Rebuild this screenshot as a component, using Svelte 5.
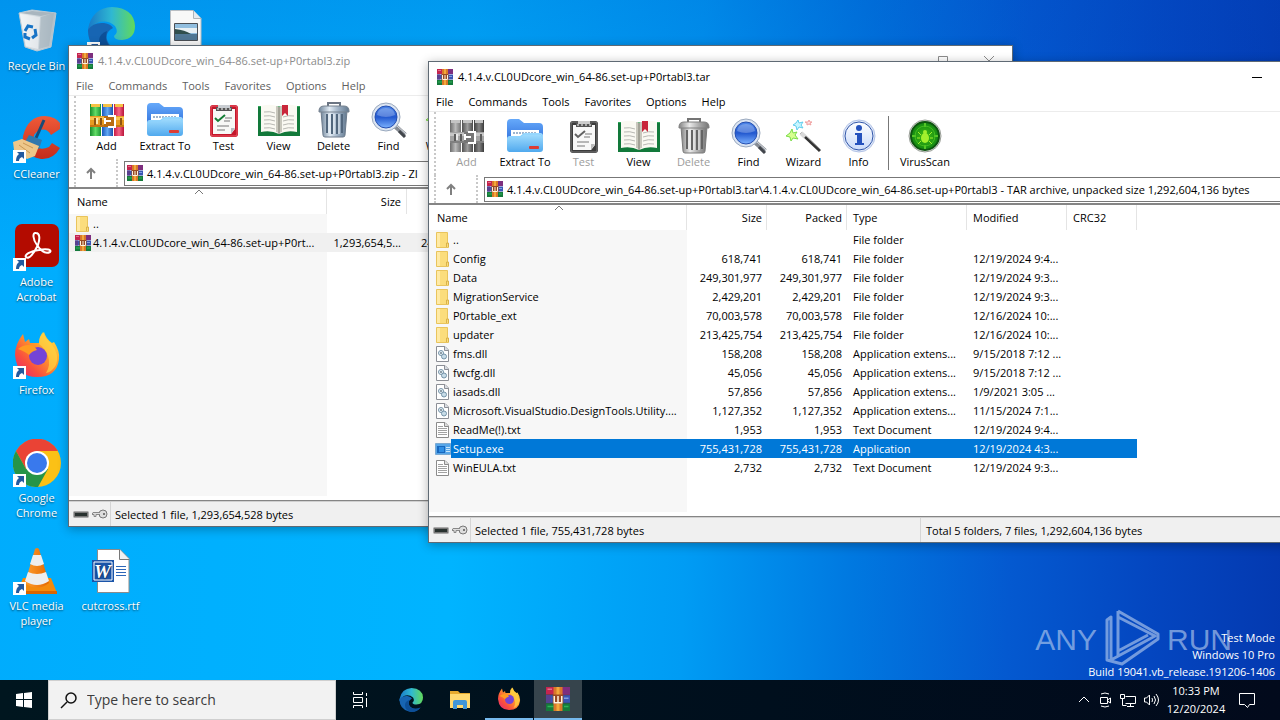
<script>
  const toolbar = [
    { icon: 'books', label: 'Add' },
    { icon: 'extract', label: 'Extract To', wide: true },
    { icon: 'test', label: 'Test' },
    { icon: 'view', label: 'View' },
    { icon: 'trash', label: 'Delete' },
    { icon: 'find', label: 'Find' },
    { icon: 'wizard', label: 'Wizard' },
    { icon: 'info', label: 'Info' },
    { icon: 'virus', label: 'VirusScan', wide: true, split: true }
  ];
  const menus = ['File', 'Commands', 'Tools', 'Favorites', 'Options', 'Help'];
  const base = '4.1.4.v.CL0UDcore_win_64-86.set-up+P0rtabl3';

  const back = {
    id: 'zip',
    title: base + '.zip',
    address: base + '.zip - ZI',
    tools: toolbar.slice(0, 7),
    disabled: [],
    rows: [
      ['folder', '..', '', '', '', ''],
      ['rar', '4.1.4.v.CL0UDcore_win_64-86.set-up+P0rt...', '1,293,654,5...', '24', '', '']
    ],
    selected: 1,
    status: 'Selected 1 file, 1,293,654,528 bytes',
    total: ''
  };
  const front = {
    id: 'tar',
    title: base + '.tar',
    address: base + '.tar\\' + base + ' - TAR archive, unpacked size 1,292,604,136 bytes',
    tools: toolbar,
    disabled: ['Add', 'Test', 'Delete'],
    rows: [
      ['folder', '..', '', '', 'File folder', ''],
      ['folder', 'Config', '618,741', '618,741', 'File folder', '12/19/2024 9:4...'],
      ['folder', 'Data', '249,301,977', '249,301,977', 'File folder', '12/19/2024 9:3...'],
      ['folder', 'MigrationService', '2,429,201', '2,429,201', 'File folder', '12/19/2024 9:3...'],
      ['folder', 'P0rtable_ext', '70,003,578', '70,003,578', 'File folder', '12/16/2024 10:...'],
      ['folder', 'updater', '213,425,754', '213,425,754', 'File folder', '12/16/2024 10:...'],
      ['dll', 'fms.dll', '158,208', '158,208', 'Application extens...', '9/15/2018 7:12 ...'],
      ['dll', 'fwcfg.dll', '45,056', '45,056', 'Application extens...', '9/15/2018 7:12 ...'],
      ['dll', 'iasads.dll', '57,856', '57,856', 'Application extens...', '1/9/2021 3:05 ...'],
      ['dll', 'Microsoft.VisualStudio.DesignTools.Utility....', '1,127,352', '1,127,352', 'Application extens...', '11/15/2024 7:1...'],
      ['txt', 'ReadMe(!).txt', '1,953', '1,953', 'Text Document', '12/19/2024 9:4...'],
      ['exe', 'Setup.exe', '755,431,728', '755,431,728', 'Application', '12/19/2024 4:3...'],
      ['txt', 'WinEULA.txt', '2,732', '2,732', 'Text Document', '12/19/2024 9:3...']
    ],
    selected: 11,
    status: 'Selected 1 file, 755,431,728 bytes',
    total: 'Total 5 folders, 7 files, 1,292,604,136 bytes'
  };

  const shortcuts = [
    { icon: 'bin', label: 'Recycle Bin', col: 1, row: 1 },
    { icon: 'ccleaner', label: 'CCleaner', col: 1, row: 2, link: true },
    { icon: 'acrobat', label: 'Adobe Acrobat', col: 1, row: 3, link: true },
    { icon: 'firefox', label: 'Firefox', col: 1, row: 4, link: true },
    { icon: 'chrome', label: 'Google Chrome', col: 1, row: 5, link: true },
    { icon: 'vlc', label: 'VLC media player', col: 1, row: 6, link: true },
    { icon: 'edge', label: '', col: 2, row: 1, link: true },
    { icon: 'word', label: 'cutcross.rtf', col: 2, row: 6 },
    { icon: 'image', label: '', col: 3, row: 1 }
  ];
</script>

{#snippet glyph(name)}
  {#if name === 'rar'}
    <svg viewBox="0 0 16 16" width="16" height="16">
      <path fill="#c4244f" d="M0 0h16v5H0z" /><path fill="#7d2e7e" d="M11 0h5v5h-5z" />
      <path fill="#3a55b4" d="M0 5.500h16v5H0z" /><path fill="#59408f" d="M0 5.500h3v5H0z" />
      <path fill="#157a3b" d="M0 11h16v5H0z" /><path fill="#2eb259" d="M1 12.500h4v1H1zM12 12.500h3v1h-3z" />
      <path fill="#e0708a" d="M1 1h3v1H1z" /><path fill="#7fa0e0" d="M12 7h3v1h-3z" />
      <path fill="#d9782a" d="M5 0h6v16H5z" /><path fill="#f2a93b" d="M7 0h2v16H7z" />
      <path fill="#9a4a22" d="M4.500 5h7v6h-7z" /><path fill="none" stroke="#fff4dc" d="M5.500 6v4.500h5V6M8 6v4" />
    </svg>
  {:else if name === 'books'}
    <svg viewBox="0 0 34 34" width="34" height="34">
      <path fill="url(#bookG)" d="M0 1h11v32H0z" /><path fill="url(#bookB)" d="M12 1h11v32H12z" /><path fill="url(#bookR)" d="M24 1h10v32H24z" />
      <path fill="#f6c244" d="M1 1h9v3H1zM13 1h9v3h-9zM25 1h8v3h-8z" />
      <path fill="#e89b22" d="M0 13h34v11H0z" /><path fill="#f9c452" d="M0 14h34v3H0z" /><path fill="#c67612" d="M0 22h34v2H0z" />
      <path fill="#8f5410" d="M4 15h2v7H4zM10 15h2v7h-2zM30 15h2v7h-2z" /><path fill="#ffe9a8" d="M6 15h2v6H6z" />
      <rect x="14" y="13" width="12" height="11" rx="1" fill="#b96c14" />
      <path fill="none" stroke="#fff" stroke-width="2" d="M18 13h7v11h-7M14 18h7M15 15v6" />
    </svg>
  {:else if name === 'extract'}
    <svg viewBox="0 0 38 36" width="38" height="36">
      <path fill="url(#foldBack)" d="M1 5q0-4 4-4h8l5 4h15q4 0 4 4v18H1z" />
      <path fill="#fff" d="M5 12h28v12H5z" /><path stroke="#9db4cf" stroke-width="2" stroke-dasharray="2 1" d="M7 15h24" />
      <path fill="url(#foldFront)" d="M1 21q0-3 3-3h10l4-3h16q3 0 3 3v13q0 3-3 3H4q-3 0-3-3z" />
      <path fill="none" stroke="#8ad2ff" d="M2 22q0-3 3-3h9l4-3h15q3 0 3 3" /><rect x="23" y="28" width="10" height="3" rx="1" fill="#dd3d35" />
    </svg>
  {:else if name === 'test'}
    <svg viewBox="0 0 30 34" width="30" height="34">
      <rect x="1" y="2" width="28" height="32" rx="3" fill="#c3162b" /><rect x="2" y="3" width="26" height="30" rx="2" fill="none" stroke="#ee5964" />
      <path fill="#f8f8f6" d="M4 6h22v20l-4 5H4z" /><path fill="#b7bcc2" d="m22 31 4-6h-4z" />
      <path fill="#555" d="M7 4h16v4H7z" /><path fill="#c9cdd2" d="M9 2h12v3H9z" /><path stroke="#fff" stroke-dasharray="2 2" d="M8 6h14" />
      <path fill="none" stroke="#147e35" stroke-width="2" d="m6 15 3 3 7-6" /><path stroke="#777" d="M16 15h7M15 18h6M8 23h12M8 27h8" />
    </svg>
  {:else if name === 'view'}
    <svg viewBox="0 0 42 34" width="42" height="34">
      <path fill="#12793a" d="M0 3h42v30H0z" /><path fill="#30a85a" d="M0 3h42v1H0z" />
      <path fill="#faf9f2" d="M3 3q10-3 18 1 8-4 18-1v26q-10-2-18 2-8-4-18-2z" />
      <path fill="#c9c8bd" d="M18 3q2 0 3 1 1-1 3-1v26q-2 0-3 2-1-2-3-2z" /><path stroke="#7d7c70" d="M21 4v27" />
      <path fill="none" stroke="#b8b8b3" d="M6 9q6-1 11 1M6 13q6-1 11 1M6 17q6-1 11 1M6 21q6-1 11 1M6 25q6-1 11 1M25 14q5-2 11-1M25 18q5-2 11-1M25 22q5-2 11-1M25 26q5-2 11-1" />
      <path fill="#c9263a" d="M24 2h6v11l-3-3-3 3z" />
    </svg>
  {:else if name === 'trash'}
    <svg viewBox="0 0 32 36" width="32" height="36">
      <path fill="none" stroke="#6b7583" stroke-width="2" d="M10 4V1h12v3" /><path fill="url(#metal)" stroke="#6c7b8c" d="M3 9h26l-2 24q0 2-2 2H7q-2 0-2-2z" />
      <path stroke="#52677d" stroke-width="2" d="M9 12v19M14 12v20M19 12v20M24 12v19" /><path stroke="#edf4fa" d="M11 12v19M16 12v20M21 12v20" />
      <path fill="url(#metal)" stroke="#77828f" d="M1 9q0-5 5-5h20q5 0 5 5v1H1z" />
    </svg>
  {:else if name === 'find'}
    <svg viewBox="0 0 38 36" width="38" height="36">
      <path stroke="#878c94" stroke-width="5" d="m25 24 10 9" /><path stroke="#42464c" stroke-width="3" d="m29 29 6 6" /><path stroke="#d9dde2" d="m26 23 10 9" />
      <circle cx="16" cy="15" r="14" fill="#dce5f2" stroke="#9aa9be" /><circle cx="16" cy="15" r="11" fill="url(#lens)" stroke="#254fb0" />
      <path fill="#fff" opacity=".25" d="M7 13q1-7 9-7t9 7q-9 4-18 0" />
    </svg>
  {:else if name === 'wizard'}
    <svg viewBox="0 0 36 36" width="36" height="36">
      <path stroke="#333" stroke-width="3" d="m15 15 19 18" /><path stroke="#a7a7a7" d="m16 14 19 18" /><path stroke="#d9d9d9" stroke-width="4" d="m15 15 4 4" />
      <path fill="#d7ff8f" stroke="#7bdc4a" d="m6 11 1 4 4-1-2 3 3 4-5-1-2 3-1-4-4-1 4-3z" />
      <path fill="#c6f6ff" stroke="#62cdee" d="m12 2 1 3 4-1-2 3 2 3-4-1-2 3-1-4-3-1 3-2z" /><path fill="#ffe1e1" stroke="#f0a0a0" d="m23 2 1 2h2l-2 1 1 2-2-1-2 1V5l-2-1h3z" />
    </svg>
  {:else if name === 'info'}
    <svg viewBox="0 0 34 34" width="34" height="34">
      <circle cx="17" cy="17" r="16" fill="#dfe8f8" stroke="#b3c3e6" /><circle cx="17" cy="17" r="14" fill="url(#pale)" stroke="#3156a9" />
      <circle cx="17" cy="9" r="3" fill="#2451bd" /><path fill="#2451bd" d="M13 14h7v10h2v2H13v-2h2v-8h-2z" />
    </svg>
  {:else if name === 'virus'}
    <svg viewBox="0 0 34 34" width="34" height="34">
      <circle cx="17" cy="17" r="16" fill="#e6e9e4" stroke="#989d96" /><circle cx="17" cy="17" r="14" fill="url(#green)" stroke="#0e5410" stroke-width="2" />
      <path stroke="#93ff3f" d="M17 4v4M17 26v4M4 17h4M26 17h4" /><circle cx="17" cy="17" r="10" fill="none" stroke="#43bc20" />
      <ellipse cx="17" cy="19" rx="4" ry="5" fill="#a2f02d" /><circle cx="17" cy="13" r="2" fill="#a2f02d" /><path fill="none" stroke="#a2f02d" d="m13 16-3-3M12 19H9M13 22l-3 3M21 16l3-3M22 19h3M21 22l3 3" />
    </svg>
  {:else if name === 'folder'}
    <svg viewBox="0 0 16 16" width="16" height="16"><path fill="#fbdd7c" stroke="#e9c45c" d="M1.500.5h11V11l1 1v3.500h-12z" /><path fill="#ffeaa5" d="M2 1h3v14H2z" /><path fill="none" stroke="#d9b24a" d="M11.500 15v-4h2v4" /></svg>
  {:else if name === 'dll'}
    <svg viewBox="0 0 16 16" width="16" height="16"><path fill="#fff" stroke="#8c8f96" d="M1.500.5H10l3.500 3.500v11.500h-12z" /><path fill="#d9dde4" stroke="#8c8f96" d="M9.500.5v4h4" /><circle cx="6" cy="7" r="2.500" fill="#e6f1f6" stroke="#7593a8" /><circle cx="9" cy="10.500" r="2.500" fill="#c7dce8" stroke="#7593a8" /><circle cx="6" cy="7" r="1" fill="#71808c" /></svg>
  {:else if name === 'txt'}
    <svg viewBox="0 0 16 16" width="16" height="16"><path fill="#fff" stroke="#8b8b8b" d="M1.500.5H10l3.500 3.500v11.500h-12z" /><path fill="#ddd" stroke="#8b8b8b" d="M9.500.5v4h4" /><path stroke="#a2a2a2" d="M3 4.500h5M3 6.500h9M3 8.500h9M3 10.500h9M3 12.500h9" /></svg>
  {:else if name === 'exe'}
    <svg viewBox="0 0 16 16" width="16" height="16"><path fill="#57a6e8" stroke="#7aa9d2" d="M.5 2.500h15v11H.5z" /><path fill="#1867bd" d="M2 5h8v7H2z" /><path fill="#2e8ee4" d="M4 6h5v5H4z" /><path stroke="#c8e5fb" d="M11 6.500h4M11 8.500h4M11 10.500h4" /></svg>
  {:else if name === 'bin'}
    <svg viewBox="0 0 48 48" width="48" height="48"><path fill="url(#glass)" stroke="#bac8d2" d="m6 6 13-3 24 3-5 34-14 4-12-4z" /><path fill="#a9b6bf" d="m7 6 12-2 22 2-13 3z" /><path fill="#fff" opacity=".45" d="m7 7 20 3-2 32-12-3z" /><path fill="#9eadb7" opacity=".5" d="m28 10 13-4-5 33-10 3z" /><g fill="none" stroke="#1673c6" stroke-width="3"><path d="m12 24 3-5 5 1M22 22l1 6-4 3M17 32l-5-2v-4" /></g></svg>
  {:else if name === 'ccleaner'}
    <svg viewBox="0 0 48 48" width="48" height="48"><path fill="url(#ccr)" d="m47 14-9 6q-4-7-11-5-8 3-6 12 3 10 15 5l3-4 8 5q-7 12-19 11Q7 40 10 21 15 1 32 1q11 1 15 7z" /><path stroke="#174b78" stroke-width="3" d="m31 5-8 18" /><path fill="#3178ad" d="m16 20 13 5-3 9-15-5z" /><path fill="#edc78a" d="m9 24 17 7-4 10-8 3-13-9-1-8z" /><path stroke="#c99753" d="m10 28 10 5M6 30l11 8" /></svg>
  {:else if name === 'acrobat'}
    <svg viewBox="0 0 48 48" width="48" height="48"><rect x="2" y="1" width="44" height="43" rx="7" fill="#b30b00" /><path fill="none" stroke="#fff" stroke-width="2" d="M23 10c-4-1-3 7 1 12 4 6 9 9 13 7 2-2-3-4-11-2-9 1-15 5-13 7 3 3 8-4 12-12 2-6 2-12-2-12z" /></svg>
  {:else if name === 'firefox'}
    <svg viewBox="0 0 48 48" width="48" height="48"><path fill="url(#fox)" d="M2 24Q2 13 10 3l2 8 4-3 1 4h9q0-7 5-11 2 7 8 11l2-1q6 9 5 17-2 18-22 18T2 24" /><path fill="#ffd443" d="M30 1q2 7 8 11 9 12 5 22-4 7-10 8 5-8 2-17-3-8-9-12 0-8 4-12" opacity=".7" /><circle cx="25" cy="25" r="9" fill="#7444d6" /><path fill="#ff9b22" d="M5 18q7-6 16-3l3 4q-5 1-8 5-3-3-11-6" /></svg>
  {:else if name === 'chrome'}
    <svg viewBox="0 0 48 48" width="48" height="48"><circle cx="24" cy="24" r="24" fill="#fbc116" /><path fill="#ea4335" d="M3 12a24 24 0 0 1 42 0H24L13 30z" /><path fill="#269448" d="M3 12a24 24 0 0 0 22 36l10-18H13z" /><circle cx="24" cy="24" r="12" fill="#fff" /><circle cx="24" cy="24" r="10" fill="#3979ed" /></svg>
  {:else if name === 'vlc'}
    <svg viewBox="0 0 48 48" width="48" height="48"><path fill="#f48a0c" d="m10 31 28 0 6 15H4z" /><path fill="#d96500" d="M4 44h40v3H4z" /><path fill="url(#vlc)" d="M22 2q2-2 4 0l10 34q-12 9-24 0z" /><path fill="#eee" d="m20 8 8 0 3 9q-7 4-14 0zM15 25q9 4 18 0l3 9q-12 8-24 0z" /></svg>
  {:else if name === 'edge'}
    <svg viewBox="0 0 48 48" width="48" height="48"><path fill="url(#edgeA)" d="M1 22Q5 1 25 0q22 1 23 19 0 13-13 14-8 0-8-4 5-4 1-10-8-7-18-3Q3 20 1 27z" /><path fill="#1765b3" d="M1 23q5-8 16-7 7 1 9 5-8 4-6 12 3 10 18 8l5-2Q34 50 20 47 1 42 1 23" /><path fill="#0d4f98" d="M20 24q-4 15 9 17 8 2 14-2-7 9-17 9-14-2-14-14 0-7 8-10" /></svg>
  {:else if name === 'word'}
    <svg viewBox="0 0 48 48" width="48" height="48"><path fill="#fff" stroke="#8b8b8b" d="M10.500 2.500H33l9 9v34H10.500z" /><path fill="#f1f1f1" stroke="#777" d="M32.500 2.500v10H42" /><path fill="#1b55a9" d="M5 13h22v22H5z" /><path stroke="#2c66b8" d="M29 19.500h10M29 22.500h10M29 25.500h10M29 28.500h10" /><path fill="none" stroke="#fff" d="M7 15h18v18H7z" /><text x="7" y="31" fill="#fff" font-family="Liberation Serif" font-size="19" font-weight="700" font-style="italic">W</text></svg>
  {:else if name === 'image'}
    <svg viewBox="0 0 48 48" width="48" height="48"><path fill="#f8f8f8" stroke="#b9bec3" d="M8.500 3.500H31l8 8v34H8.500z" /><path fill="#e5eaef" stroke="#aeb4ba" d="M31.500 3.500v8H39" /><path fill="#91bedf" stroke="#4b4f55" d="M12.500 16.500h23v17h-23z" /><path fill="#e8f0f4" d="M13 21h22v5H13z" /><path fill="#304f4d" d="M13 22q10 1 16 5H13z" /><path fill="#507794" d="M13 27h22v6H13z" /></svg>
  {/if}
{/snippet}

{#snippet windowView(w)}
  <section class="window {w.id}" aria-label={w.title}>
    <header class="title">
      {@render glyph('rar')}
      <span>{w.title}</span>
      <div class="controls">
        <button aria-label="Minimize"><svg viewBox="0 0 12 12"><path d="M1 6.500h10" /></svg></button>
        <button aria-label="Maximize"><svg viewBox="0 0 12 12"><path d="M1.500 1.500h9v9h-9z" /></svg></button>
        <button aria-label="Close"><svg viewBox="0 0 12 12"><path d="m1 1 10 10M11 1 1 11" /></svg></button>
      </div>
    </header>
    <nav class="menu">{#each menus as m}<button>{m}</button>{/each}</nav>
    <div class="tools">
      {#each w.tools as t}
        {#if t.split}<i class="split"></i>{/if}
        <button class:wide={t.wide} disabled={w.disabled.includes(t.label)}>
          <span class="pic">{@render glyph(t.icon)}</span>{t.label}
        </button>
      {/each}
    </div>
    <div class="location">
      <button class="up" aria-label="Up one level"><svg viewBox="0 0 12 12" width="12" height="12"><path d="M6 12V2M2 6l4-4 4 4" /></svg></button>
      <div class="address">{@render glyph('rar')}<span>{w.address}</span></div>
    </div>
    <div class="list">
      <table>
        <colgroup><col class="c-name" /><col class="c-num" /><col class="c-num" /><col class="c-type" /><col class="c-mod" /><col class="c-crc" /></colgroup>
        <thead>
          <tr>
            <th>Name<svg class="sort" viewBox="0 0 10 6" width="10" height="6"><path d="m1 5 4-4 4 4" /></svg></th>
            <th class="num">Size</th><th class="num">{w.total ? 'Packed' : ''}</th><th>{w.total ? 'Type' : ''}</th><th>{w.total ? 'Modified' : ''}</th><th>{w.total ? 'CRC32' : ''}</th>
          </tr>
        </thead>
        <tbody>
          {#each w.rows as r, i}
            <tr class:selected={i === w.selected}>
              <td class="name"><div>{@render glyph(r[0])}<span>{r[1]}</span></div></td>
              <td class="num">{r[2]}</td><td class="num packed">{r[3]}</td><td>{r[4]}</td><td>{r[5]}</td><td></td>
            </tr>
          {/each}
        </tbody>
      </table>
    </div>
    <footer class="status">
      <div class="lights">
        <svg viewBox="0 0 16 10" width="16" height="10"><rect x="0.500" y="2.500" width="15" height="6" rx="1" fill="#777" stroke="#aaa" /><path fill="#28312f" d="M2 4h12v3H2z" /></svg>
        <svg viewBox="0 0 16 10" width="16" height="10"><circle cx="11" cy="5" r="4" fill="#ddd" stroke="#777" /><circle cx="12" cy="5" r="1" fill="#555" /><path fill="#ddd" stroke="#888" d="M8 3.500H1l-1 2h2v2h2v-2h4" /></svg>
      </div>
      <div class="message">{w.status}</div>
      <div class="total">{w.total}</div>
    </footer>
  </section>
{/snippet}

<svg class="defs" aria-hidden="true">
  <defs>
    <linearGradient id="bookG"><stop stop-color="#178b2c" /><stop offset=".5" stop-color="#63dc66" /><stop offset="1" stop-color="#1a9434" /></linearGradient>
    <linearGradient id="bookB"><stop stop-color="#1c58bd" /><stop offset=".5" stop-color="#61a8f3" /><stop offset="1" stop-color="#1c4eae" /></linearGradient>
    <linearGradient id="bookR"><stop stop-color="#c81a45" /><stop offset=".5" stop-color="#f46587" /><stop offset="1" stop-color="#b81439" /></linearGradient>
    <linearGradient id="foldBack" x2="0" y2="1"><stop stop-color="#66a9fa" /><stop offset="1" stop-color="#2868d8" /></linearGradient>
    <linearGradient id="foldFront" x2="0" y2="1"><stop stop-color="#a7e0ff" /><stop offset="1" stop-color="#50a9ee" /></linearGradient>
    <linearGradient id="metal"><stop stop-color="#71869b" /><stop offset=".35" stop-color="#e1ebf4" /><stop offset=".65" stop-color="#9db0c4" /><stop offset="1" stop-color="#62788e" /></linearGradient>
    <linearGradient id="lens" x2="0" y2="1"><stop stop-color="#4f88ea" /><stop offset=".5" stop-color="#2258cf" /><stop offset="1" stop-color="#7cb2ff" /></linearGradient>
    <linearGradient id="pale" x2="0" y2="1"><stop stop-color="#fff" /><stop offset="1" stop-color="#c9dafa" /></linearGradient>
    <radialGradient id="green"><stop stop-color="#43bf15" /><stop offset="1" stop-color="#118711" /></radialGradient>
    <linearGradient id="glass"><stop stop-color="#e8edf0" /><stop offset="1" stop-color="#b0bdc6" /></linearGradient>
    <linearGradient id="ccr" x2="0" y2="1"><stop stop-color="#ef5a38" /><stop offset="1" stop-color="#c42b1c" /></linearGradient>
    <linearGradient id="fox" x1="1" x2="0" y2="1"><stop stop-color="#fff04d" /><stop offset=".4" stop-color="#ff9a2b" /><stop offset=".7" stop-color="#f9503e" /><stop offset="1" stop-color="#e51d7c" /></linearGradient>
    <linearGradient id="vlc"><stop stop-color="#ff9d2e" /><stop offset="1" stop-color="#e46800" /></linearGradient>
    <linearGradient id="edgeA"><stop stop-color="#1878c8" /><stop offset=".5" stop-color="#2fb8d2" /><stop offset="1" stop-color="#62d95a" /></linearGradient>
  </defs>
</svg>

<div class="screen">
  <main class="desktop">
    <div class="icons">
      {#each shortcuts as s}
        <button class="shortcut" aria-label={s.label || s.icon} style="grid-column: {s.col}; grid-row: {s.row}">
          <span class="art">
            {@render glyph(s.icon)}
            {#if s.link}<svg class="arrow" viewBox="0 0 13 13" width="13" height="13"><path fill="#fff" d="M0 0h13v13H0z" /><path fill="#235a9f" d="M4 2h7v7L9 7q-3 1-3 4H3q0-5 3-7z" /></svg>{/if}
          </span>
          <span>{s.label}</span>
        </button>
      {/each}
    </div>
    <div class="brand">
      <span>ANY</span>
      <svg viewBox="0 0 56 62" width="56" height="62"><path d="M14 2 54 25v5L18 55 3 51V11l4-3v43l44-24L14 8v34l30-16M14 2v46" /></svg>
      <span>RUN</span>
    </div>
    <div class="build"><span>Test Mode</span><span>Windows 10 Pro</span><span>Build 19041.vb_release.191206-1406</span></div>
    {@render windowView(back)}
    {@render windowView(front)}
  </main>

  <footer class="taskbar">
    <button class="start" aria-label="Start"><svg viewBox="0 0 16 16" width="16" height="16"><path fill="#fff" d="M0 2l7-1v6H0zM8 1l8-1v7H8zM0 8h7v7l-7-1zM8 8h8v8l-8-1z" /></svg></button>
    <label class="search">
      <svg viewBox="0 0 18 18" width="18" height="18"><circle cx="11" cy="7" r="5" /><path d="m7 11-6 6" /></svg>
      <input type="text" placeholder="Type here to search" aria-label="Search" />
    </label>
    <button class="task" aria-label="Task View"><svg class="line" viewBox="0 0 16 16" width="16" height="16"><path d="M1.500 0v2.500h9V0M1.500 5.500h9v5h-9zM1.500 16v-2.500h9V16M14.500 1v3M14.500 6v9" /></svg></button>
    <button class="task scaled" aria-label="Edge">{@render glyph('edge')}</button>
    <button class="task" aria-label="File Explorer"><svg viewBox="0 0 22 20" width="22" height="20"><path fill="#e6aa2e" d="M1 1h8l2 2h10v15H1z" /><path fill="#ffd970" d="M1 4h20v14H1z" /><path fill="#3f95d8" d="M4 12q0-2 2-2h10q2 0 2 2v7h-4v-4H8v4H4z" /></svg></button>
    <button class="task scaled open" aria-label="Firefox">{@render glyph('firefox')}</button>
    <button class="task scaled open active" aria-label="WinRAR">{@render glyph('rar')}</button>
    <div class="tray">
      <svg class="line" viewBox="0 0 12 16" width="12" height="16"><path d="m1 10 5-5 5 5" /></svg>
      <svg class="line" viewBox="0 0 14 16" width="14" height="16"><path d="M3 2q4-2 8 0M3 14q4 2 8 0M2.500 5.500h7v6h-7zM9.500 8l3-2v5l-3-2" /></svg>
      <svg class="line" viewBox="0 0 16 16" width="16" height="16"><path d="M5.500 4.500h10v7h-10M10.500 11.500v3M7 14.500h7M.5 2.500h4v4h-4zM2.500 6.500v7h4" /></svg>
      <svg class="line" viewBox="0 0 16 16" width="16" height="16"><path d="M.5 6v4h2l3 3V3l-3 3zM8 6q1 2 0 4M10 4q3 4 0 8M12 2q5 6 0 12" /></svg>
      <div class="clock"><span>10:33 PM</span><span>12/20/2024</span></div>
      <svg class="line note" viewBox="0 0 18 18" width="18" height="18"><path d="M1.500 2.500h15v11h-5l-2 3-3-3h-5z" /></svg>
    </div>
  </footer>
</div>

<style>
  :global(body) { margin: 0; overflow: hidden; }
  .screen { height: 100vh; display: flex; flex-direction: column; font-family: "Open Sans", "Noto Sans", sans-serif; font-size: 11px; line-height: 15px; color: #000; }
  .screen :global(svg) { display: block; flex: none; }
  button { font: inherit; color: inherit; background: none; border: 0; padding: 0; margin: 0; }
  .defs { position: absolute; width: 0; height: 0; }

  .desktop {
    position: relative; flex: 1; min-height: 0; overflow: hidden;
    background:
      linear-gradient(to bottom, rgba(0, 70, 190, .24), transparent 40%),
      linear-gradient(92deg, #00acfd 0%, #00b4ff 36%, #009cf4 54%, #0078e0 67%, #0459d0 79%, #0446c0 90%, #0439b0 100%);
  }
  .icons { display: grid; grid-template-columns: 73px 75px 75px; grid-auto-rows: 108px; }
  .shortcut { display: flex; flex-direction: column; align-items: center; gap: 3px; padding: 7px 5px 0; color: #fff; text-shadow: 0 1px 2px rgba(0, 0, 0, .6); align-self: start; }
  .shortcut > span:last-child { min-width: 62px; text-align: center; }
  .art { position: relative; }
  .arrow { position: absolute; left: 0; bottom: 0; }

  .brand { position: absolute; right: 48px; bottom: 9px; display: flex; align-items: center; gap: 7px; color: rgba(190, 210, 240, .6); font-family: "Liberation Sans Narrow", "Liberation Sans", sans-serif; font-size: 30px; line-height: 62px; }
  .brand path { fill: none; stroke: currentColor; stroke-width: 3; stroke-linejoin: round; }
  .build { position: absolute; right: 5px; bottom: 0; display: flex; flex-direction: column; align-items: flex-end; line-height: 17px; color: #fff; }

  .window { position: absolute; box-sizing: border-box; width: 945px; height: 482px; display: flex; flex-direction: column; background: #fff; border: 1px solid #5f6a74; box-shadow: 0 2px 10px rgba(0, 0, 0, .3); white-space: nowrap; }
  .zip { left: 68px; top: 45px; }
  .tar { left: 428px; top: 61px; }
  .title { display: flex; align-items: center; height: 29px; padding-left: 8px; gap: 5px; }
  .zip .title { color: #8c8c8c; }
  .controls { margin-left: auto; display: flex; }
  .controls button { width: 46px; height: 29px; display: grid; place-items: center; }
  .controls svg { width: 12px; height: 12px; fill: none; stroke: currentColor; }
  .menu { display: flex; gap: 15px; padding-left: 7px; height: 20px; align-items: center; border-bottom: 1px solid #ececec; }
  .zip .menu { color: #606060; }
  .tools { display: flex; height: 63px; margin-left: 5px; padding-left: 3px; border-left: 2px dotted #c8c8c8; }
  .tools button { width: 55px; display: flex; flex-direction: column; align-items: center; padding-top: 5px; }
  .tools .wide { width: 62px; }
  .pic { height: 37px; display: grid; place-items: center; }
  .tools button:disabled { color: #9c9c9c; }
  .tools button:disabled .pic { filter: grayscale(1); }
  .tools .split { width: 1px; background: #777; margin: 4px 5px 5px 2px; }
  .location { display: flex; height: 28px; align-items: center; margin-left: 5px; border-left: 2px dotted #c8c8c8; }
  .up { width: 42px; height: 28px; padding-left: 9px; border-right: 2px dotted #c8c8c8; margin-right: 6px; }
  .up path { fill: none; stroke: #808080; stroke-width: 2; }
  .address { flex: 1; box-sizing: border-box; height: 25px; border: 1px solid #777; display: flex; align-items: center; gap: 4px; padding-left: 2px; }
  .list { flex: 1; min-height: 0; border-top: 2px solid #858585; border-bottom: 1px solid #858585; background: linear-gradient(#f7f7f7, #f7f7f7) 0 0 / 258px calc(100% - 4px) no-repeat; }
  table { width: 708px; table-layout: fixed; border-collapse: collapse; }
  .c-name { width: 258px; }
  .c-num { width: 80px; }
  .c-type { width: 120px; }
  .c-mod { width: 100px; }
  .c-crc { width: 70px; }
  th { position: relative; height: 25px; padding: 0 6px; font-weight: 400; text-align: left; background: #fff; box-shadow: inset -1px 0 #e4e4e4; }
  th:first-child { padding-left: 8px; }
  .sort { position: absolute; top: 0; left: 125px; fill: none; stroke: #777; }
  td { height: 19px; padding: 0 6px; }
  .num { text-align: right; padding: 0 5px; }
  .name { padding: 0; }
  .name div { display: flex; align-items: center; height: 19px; padding-left: 6px; }
  .name span { flex: 1; line-height: 19px; padding-left: 2px; }
  .tar .selected td { background: #0078d7; color: #fff; }
  .tar .selected .name { background: linear-gradient(to right, #f7f7f7 22px, #0078d7 22px); }
  .zip .selected td { background: #f0f0f0; }
  .zip .num { padding-right: 6px; }
  .zip .packed { text-align: left; padding-left: 14px; }
  .status { box-sizing: border-box; display: flex; height: 25px; align-items: center; background: #f0f0f0; border-top: 1px solid #d0d0d0; line-height: 24px; }
  .lights { display: flex; gap: 3px; align-items: center; width: 37px; height: 24px; padding-left: 4px; border-right: 1px solid #d5d5d5; }
  .message { width: 445px; padding: 2px 0 0 4px; line-height: 22px; border-right: 1px solid #d5d5d5; }
  .total { padding: 2px 0 0 5px; line-height: 22px; }

  .taskbar { flex: none; height: 40px; display: flex; align-items: stretch; color: #fff; background: linear-gradient(to right, #00161f, #000f1d 60%, #020a1c); }
  .start { width: 48px; display: grid; place-items: center; }
  .search { box-sizing: border-box; width: 288px; display: flex; align-items: center; gap: 9px; padding-left: 11px; background: #f2f2f2; border: 1px solid #cfcfcf; }
  .search svg { fill: none; stroke: #111; stroke-width: 1.5; }
  .search input { flex: 1; min-width: 0; height: 24px; border: 0; padding: 0; background: none; font: inherit; font-size: 14px; line-height: 24px; outline: none; }
  .search input::placeholder { color: #3c3c3c; opacity: 1; }
  .task { width: 48px; margin-right: 1px; display: grid; place-items: center; box-sizing: border-box; }
  .scaled :global(svg) { width: 24px; height: 24px; }
  .search + .task { margin-right: 3px; }
  .open { border-bottom: 2px solid #76b9ed; }
  .active { background: #36444c; }
  .line { fill: none; stroke: #fff; }
  .tray { margin-left: auto; display: flex; align-items: center; gap: 8px; padding-right: 24px; }
  .clock { display: flex; flex-direction: column; align-items: center; line-height: 18px; font-size: 11px; width: 60px; margin-left: -2px; }
  .note { margin-left: 4px; }
</style>
